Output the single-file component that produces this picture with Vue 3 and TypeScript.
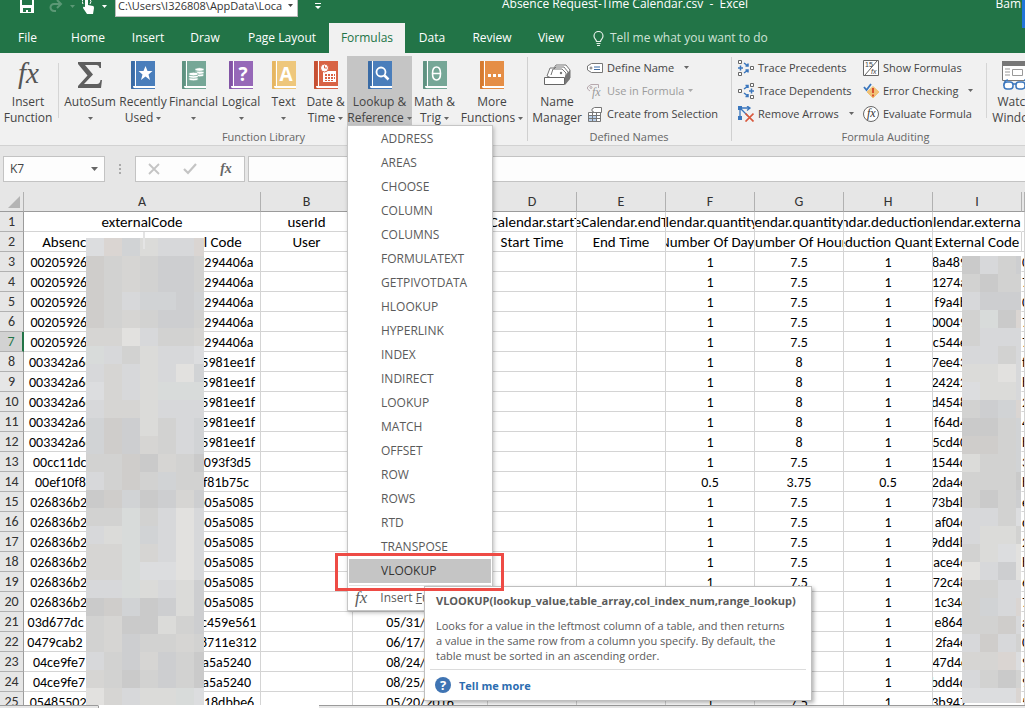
<script setup lang="ts">
import { ref } from 'vue'

interface BookButton {
  id: string
  lines: string[]
  color: string
  spine: string
  active?: boolean
}

const path = ref('C:\\Users\\I326808\\AppData\\Loca')
const cellName = ref('K7')
const formula = ref('')

const tabs = ['File', 'Home', 'Insert', 'Draw', 'Page Layout', 'Formulas', 'Data', 'Review', 'View']

const books: BookButton[] = [
  { id: 'star', lines: ['Recently', 'Used'], color: '#4a7ebb', spine: '#3a6ba5' },
  { id: 'coins', lines: ['Financial', ''], color: '#76a797', spine: '#5f9281' },
  { id: 'question', lines: ['Logical', ''], color: '#9668b8', spine: '#8254a5' },
  { id: 'letter', lines: ['Text', ''], color: '#eec77c', spine: '#e6b661' },
  { id: 'date', lines: ['Date &', 'Time'], color: '#d86344', spine: '#c65033' },
  { id: 'lens', lines: ['Lookup &', 'Reference'], color: '#4a7ebb', spine: '#3a6ba5', active: true },
  { id: 'theta', lines: ['Math &', 'Trig'], color: '#76a797', spine: '#5f9281' },
  { id: 'dots', lines: ['More', 'Functions'], color: '#e58e46', spine: '#d67b30' },
]

const functions = [
  'ADDRESS', 'AREAS', 'CHOOSE', 'COLUMN', 'COLUMNS', 'FORMULATEXT', 'GETPIVOTDATA', 'HLOOKUP',
  'HYPERLINK', 'INDEX', 'INDIRECT', 'LOOKUP', 'MATCH', 'OFFSET', 'ROW', 'ROWS', 'RTD',
  'TRANSPOSE', 'VLOOKUP',
]

const columns = ['A', 'B', 'C', 'D', 'E', 'F', 'G', 'H', 'I']

interface Row {
  n: number
  a: [string, string]
  c: string
  f: string
  g: string
  h: string
  i: string
  j: string
}

const raw: string[] = [
  '3|00205926|7294406a||1|7.5|1|8a489|0',
  '4|00205926|7294406a||1|7.5|1|1274a|7',
  '5|00205926|7294406a||1|7.5|1|f9a4b|0',
  '6|00205926|7294406a||1|7.5|1|00049|7a',
  '7|00205926|7294406a||1|7.5|1|c544e|7',
  '8|003342a6c|5981ee1f||1|8|1|7ee43|f',
  '9|003342a6c|5981ee1f||1|8|1|24242|b',
  '10|003342a6c|5981ee1f||1|8|1|d4548|2',
  '11|003342a6c|5981ee1f||1|8|1|f64d4|4',
  '12|003342a6c|5981ee1f||1|8|1|5cd40|b',
  '13|00cc11dc|b093f3d5||1|7.5|1|1544d|3',
  '14|00ef10f8|bf81b75c||0.5|3.75|0.5|2da4e|b',
  '15|026836b2|b05a5085||1|7.5|1|73b4b|e9',
  '16|026836b2|b05a5085||1|7.5|1|af046|d',
  '17|026836b2|b05a5085||1|7.5|1|9dd4b|2',
  '18|026836b2|b05a5085||1|7.5|1|ace46|b',
  '19|026836b2|b05a5085||1|7.5|1|72c48|6',
  '20|026836b2|b05a5085||1|7.5|1|1c34c|7b',
  '21|03d677dc|bc459e561|05/31/2016|1|7.5|1|e864f|a',
  '22|0479cab2|b8711e312|06/17/2016|1|7.5|1|2fa4e|0',
  '23|04ce9fe7|0a5a5240|08/24/2016|1|7.5|1|47d4c|9',
  '24|04ce9fe7|0a5a5240|08/25/2016|1|7.5|1|bdd4d|9',
  '25|05485502|b18dbbe6|05/20/2016|1|7.5|1|3b947|5',
]

const rows: Row[] = raw.map((line) => {
  const p = line.split('|')
  return { n: Number(p[0]), a: [p[1], p[2]], c: p[3], f: p[4], g: p[5], h: p[6], i: p[7], j: p[8] }
})

const shades: Record<string, string> = {
  a: '#cacaca', b: '#cfcdcb', c: '#cdced0', d: '#d2d2d1', e: '#d1d3d5', f: '#d6d5d3',
  g: '#d7d8da', h: '#dbdbd9', i: '#dcdddf', j: '#e2e1df', k: '#dad5d2', l: '#d8dbda',
}

const mosaicA = [
  'ikehggk', 'bdfdccd', 'bdfdccd', 'bdgeece', 'bdfdccd', 'ffjgddf', 'lgdhggi', 'gfghgje', 'ifghlll',
  'gffhggg', 'ebchdge', 'ebcfdge', 'ddbafda', 'gdbdedd', 'abeacfc', 'ddldgjg', 'ghlegjg', 'fflfgjg',
  'ffliijg', 'gglhghc', 'abeachc', 'dfaahdc', 'dfcddfd', 'gdcfcda', 'fdadcda', 'jfghhli',
].join('').split('')

const mosaicI = [
  'agdc', 'dadd', 'gccc', 'dlak', 'dggg', 'ggdg', 'hhjg', 'ihhg', 'dcek', 'aade', 'bbde', 'hdde',
  'ddda', 'dadc', 'ggdi', 'ghhd', 'dhij', 'jgcj', 'ddgg', 'degk', 'ddbg', 'gbgd', 'ffki', 'gdad',
  'iiik',
].join('').split('')
</script>

<template>
  <div class="page">
    <header class="titlebar">
      <div class="quick">
        <button class="qbtn save" aria-label="Save">
          <svg width="14" height="14" viewBox="0 0 14 14"><path d="M0 0h14v14H0z" fill="#fff" /><path d="M2 0h10v6H2zM3 9h8v4H8v-2H6v2H3z" fill="#227447" /></svg>
        </button>
        <button class="qbtn redo" aria-label="Redo">
          <svg width="14" height="14" viewBox="0 0 14 14"><path d="M12 5H5a3 3 0 0 0 0 7h2M8 1l4 4-4 4" fill="none" stroke="#5b9875" stroke-width="2" /></svg>
          <svg class="qc" width="5" height="3" viewBox="0 0 5 3"><path d="M0 0h5L2.5 3z" fill="#5b9875" /></svg>
        </button>
        <button class="qbtn touch" aria-label="Touch mode">
          <svg width="13" height="15" viewBox="0 0 13 15"><path d="M3 0h3v6l5 1q1 0 1 2l-1 6H5L1 9q0-2 2-1z" fill="#fff" /><path d="M1 5a4 4 0 0 1 0-5M8 5a4 4 0 0 0 0-5" fill="none" stroke="#fff" /></svg>
          <svg class="qc" width="5" height="3" viewBox="0 0 5 3"><path d="M0 0h5L2.5 3z" fill="#fff" /></svg>
        </button>
        <label class="pathbox">
          <input v-model="path" aria-label="Path" />
          <svg width="5" height="3" viewBox="0 0 5 3"><path d="M0 0h5L2.5 3z" fill="#444" /></svg>
        </label>
        <button class="qbtn more" aria-label="Customize">
          <svg width="6" height="6" viewBox="0 0 6 6"><path d="M0 0h6v1H0zM0 3h6L3 6z" fill="#fff" /></svg>
        </button>
      </div>
      <h1 class="title">Absence Request-Time Calendar.csv&nbsp; -&nbsp; Excel</h1>
      <span class="user">Bam</span>
    </header>
    <div class="edge"></div>

    <nav class="tabs">
      <button v-for="t in tabs" :key="t" class="tab" :class="{ on: t === 'Formulas' }">{{ t }}</button>
      <button class="tell">
        <svg width="11" height="15" viewBox="0 0 11 15"><path d="M3.5 10.5c0-2-2.500-2.500-2.500-5.500a4.500 4.500 0 0 1 9 0c0 3-2.500 3.500-2.500 5.500zM3.500 12.500h4M4 14.500h3" fill="none" stroke="#e5f0e9" stroke-width="1.200" /></svg>
        Tell me what you want to do
      </button>
    </nav>

    <section class="ribbon">
      <div class="group">
        <div class="library">
          <button class="big">
            <svg class="ico" width="28" height="28" viewBox="0 0 28 28"><text x="4" y="22" class="fxbig">fx</text></svg>
            <span>Insert</span><span>Function</span>
          </button>
          <i class="shortsep"></i>
          <button class="big">
            <svg class="ico" width="26" height="28" viewBox="0 0 26 28"><path d="M1 1h23v6h-1.500q-.5-3-3-3H8l8 9.500L7 23h13q3 0 3.500-4H25l-1 8H1v-2l9.500-10.500L1 3z" fill="#5f5f5f" /></svg>
            <span>AutoSum</span>
            <span><svg width="5" height="3" viewBox="0 0 5 3"><path d="M0 0h5L2.500 3z" fill="#666" /></svg></span>
          </button>
          <button v-for="b in books" :key="b.id" class="big" :class="{ active: b.active }">
            <svg class="ico" width="24" height="28" viewBox="0 0 24 28">
              <path d="M1 0h23v28H1q-1 0-1-1V1q0-1 1-1z" :fill="b.color" />
              <path d="M1 0h2.500v28H1q-1 0-1-1V1q0-1 1-1z" :fill="b.spine" />
              <path d="M4 0h1v25H4zM2 25h22v2H3q-1 0-1-2z" fill="#fff" />
              <path v-if="b.id === 'star'" d="M14.500 5l2 5h5l-4 3.500 1.500 5.500-4.500-3.500L10 19l1.500-5.500-4-3.500h5z" fill="#fff" />
              <g v-else-if="b.id === 'coins'" fill="#fff" stroke="#76a797" stroke-width=".7">
                <ellipse cx="17.500" cy="14" rx="4.500" ry="1.800" /><ellipse cx="17.500" cy="11.500" rx="4.500" ry="1.800" /><ellipse cx="17.500" cy="8.500" rx="4.500" ry="1.800" />
                <ellipse cx="11.500" cy="18" rx="4.800" ry="1.800" /><ellipse cx="11.500" cy="15.500" rx="4.800" ry="1.800" /><ellipse cx="11.500" cy="13" rx="4.800" ry="1.800" />
              </g>
              <text v-else-if="b.id === 'question'" x="14" y="20" class="mark">?</text>
              <text v-else-if="b.id === 'letter'" x="14" y="20" class="mark">A</text>
              <g v-else-if="b.id === 'date'">
                <path d="M9 10h13v11H9z" fill="#fff" />
                <path d="M11 13h2v2h-2zM14 13h2v2h-2zM17 13h2v2h-2zM11 16h2v2h-2zM14 16h2v2h-2zM17 16h2v2h-2zM20 13h1v2h-1zM20 16h1v2h-1zM11 19h2v1h-2zM14 19h2v1h-2zM17 19h2v1h-2z" fill="#d86344" />
                <circle cx="10.500" cy="7" r="4" fill="#fff" stroke="#d86344" /><path d="M10.500 4.500V7h2.500" fill="none" stroke="#d86344" />
              </g>
              <g v-else-if="b.id === 'lens'" fill="none" stroke="#fff">
                <circle cx="13" cy="11" r="4.500" stroke-width="1.800" /><path d="M16.500 14.500l4 4" stroke-width="2.500" />
              </g>
              <path v-else-if="b.id === 'theta'" d="M13.500 6q4 0 4 6.500t-4 6.500-4-6.500 4-6.500zM9.500 12.500h8" fill="none" stroke="#fff" stroke-width="1.600" />
              <path v-else d="M8 13h3v3H8zM13 13h3v3h-3zM18 13h3v3h-3z" fill="#fff" />
            </svg>
            <span>{{ b.lines[0] }}</span>
            <span>{{ b.lines[1] }}<svg width="5" height="3" viewBox="0 0 5 3"><path d="M0 0h5L2.500 3z" fill="#666" /></svg></span>
          </button>
        </div>
        <div class="caption">Function Library</div>
      </div>

      <div class="group">
        <div class="names">
          <button class="big">
            <svg class="ico" width="28" height="28" viewBox="0 0 28 28">
              <path d="M4 15l3-8h4l2-3h10l4 5v8l-6 6z" fill="#fff" stroke="#777" />
              <path d="M8 14l2-6h9l4 4v9M11 8l2-2h8l4 5v8" fill="none" stroke="#777" />
              <path d="M22 15l5-6v9l-5 6z" fill="#777" />
              <circle cx="18" cy="12" r="1.200" fill="#777" />
              <path d="M1.500 16.500h20v7h-20z" fill="#fff" stroke="#666" />
            </svg>
            <span>Name</span><span>Manager</span>
          </button>
          <div class="stack">
            <button class="small">
              <svg width="16" height="16" viewBox="0 0 16 16"><path d="M4.500 3.500h11v9h-11L.5 10V6z" fill="#fff" stroke="#777" /><circle cx="4" cy="8" r="1" fill="none" stroke="#777" /><path d="M7 7h6M7 9.500h6" stroke="#3a6ba5" /></svg>
              Define Name
              <svg class="far" width="5" height="3" viewBox="0 0 5 3"><path d="M0 0h5L2.500 3z" fill="#666" /></svg>
            </button>
            <button class="small off" disabled>
              <svg width="16" height="16" viewBox="0 0 16 16"><path d="M11.500 5V1.500H4L.5 4v2L3 8" fill="none" stroke="#b7a9ae" /><circle cx="4" cy="4.500" r="1" fill="none" stroke="#b7a9ae" /><text x="5" y="13" class="fxsm">fx</text></svg>
              Use in Formula<svg width="5" height="3" viewBox="0 0 5 3"><path d="M0 0h5L2.500 3z" fill="#aaa" /></svg>
            </button>
            <button class="small">
              <svg width="16" height="16" viewBox="0 0 16 16"><path d="M1.500 6.500h12v9h-12z" fill="#fff" /><path d="M1.500 9.500h8v6h-8z" fill="#b9d0ea" /><path d="M1.500 6.500h12v9h-12zM5.500 6.500v9M9.500 6.500v9M1.500 9.500h12M1.500 12.500h12" fill="none" stroke="#777" /><path d="M7.500 1.500h7v5h-7L5 5V3z" fill="#fff" stroke="#777" /></svg>
              Create from Selection
            </button>
          </div>
        </div>
        <div class="caption">Defined Names</div>
      </div>

      <div class="group">
        <div class="audit">
          <div class="stack">
            <button class="small">
              <svg width="16" height="16" viewBox="0 0 16 16"><path d="M.5.5h3v3h-3zM.5 12.500h3v3h-3zM12.500 6.500h3v3h-3z" fill="#fff" stroke="#666" /><path d="M0 8h5M2.500 5.500v5M6 3l4 3M10 3.500V6H7.500M6 13l4-3M10 12.500V10H7.500" fill="none" stroke="#3a76bd" stroke-width="1.500" /></svg>
              Trace Precedents
            </button>
            <button class="small">
              <svg width="16" height="16" viewBox="0 0 16 16"><path d="M12.500.5h3v3h-3zM12.500 12.500h3v3h-3zM.5 6.500h3v3h-3z" fill="#fff" stroke="#666" /><path d="M11 8h5M13.500 5.500v5M6 6l4-3M7.500 2.500H10V5M6 10l4 3M7.500 13.500H10V11" fill="none" stroke="#3a76bd" stroke-width="1.500" /></svg>
              Trace Dependents
            </button>
            <button class="small">
              <svg width="16" height="16" viewBox="0 0 16 16"><path d="M0 0h4v4H0zM0 10h4v4H0z" fill="#3a76bd" /><path d="M2 2v10M2 2h9M9 0l3 2-3 2.500M3 3l7 7" fill="none" stroke="#3a76bd" stroke-width="1.300" /><path d="M7.500 7.500l8 8M15.500 7.500l-8 8" stroke="#d9583c" stroke-width="1.700" /></svg>
              Remove Arrows
              <svg class="far" width="5" height="3" viewBox="0 0 5 3"><path d="M0 0h5L2.500 3z" fill="#666" /></svg>
            </button>
          </div>
          <div class="stack">
            <button class="small">
              <svg width="16" height="16" viewBox="0 0 16 16"><path d="M.5.500h15v15H.5z" fill="#fff" stroke="#666" /><path d="M14 1L2 15" stroke="#666" /><text x="2" y="7" class="tiny">15</text><text x="8" y="14" class="tiny it">fx</text></svg>
              Show Formulas
            </button>
            <button class="small">
              <svg width="16" height="16" viewBox="0 0 16 16"><path d="M10 3.500l6 5.500-6 6-6-6z" fill="#f0c277" stroke="#f0c277" /><path d="M9 5h2v5H9zM9 11.500h2v2H9z" fill="#d9502f" /><path d="M1 4l2.500 3L8 1" fill="none" stroke="#3a76bd" stroke-width="1.800" /></svg>
              Error Checking
              <svg class="far" width="5" height="3" viewBox="0 0 5 3"><path d="M0 0h5L2.500 3z" fill="#666" /></svg>
            </button>
            <button class="small">
              <svg width="16" height="16" viewBox="0 0 16 16"><circle cx="8" cy="8" r="7.500" fill="#fff" stroke="#666" /><text x="4" y="11" class="fxsm dark">fx</text></svg>
              Evaluate Formula
            </button>
          </div>
          <i class="shortsep"></i>
          <button class="big watch">
            <svg class="ico" width="26" height="30" viewBox="0 0 26 30"><path d="M.5.5h25v19H.5z" fill="#fff" stroke="#777" /><path d="M0 0h26v5H0z" fill="#777" /><path d="M3 8h5M3 11h5M3 14h5M10.500 8.500h10v6h-10z" fill="none" stroke="#999" /><path d="M2 25q0-6 4-6M22 19q2 0 3 4M11 23h3" fill="none" stroke="#3a76bd" stroke-width="1.500" /><rect x="2" y="21" width="9" height="7" rx="3" fill="#fff" stroke="#3a76bd" stroke-width="1.500" /><rect x="14" y="21" width="9" height="7" rx="3" fill="#fff" stroke="#3a76bd" stroke-width="1.500" /></svg>
            <span>Watch</span><span>Window</span>
          </button>
        </div>
        <div class="caption">Formula Auditing</div>
      </div>
    </section>

    <div class="formulabar">
      <label class="namebox">
        <input v-model="cellName" aria-label="Name box" />
        <svg width="7" height="4" viewBox="0 0 7 4"><path d="M0 0h7L3.500 4z" fill="#666" /></svg>
      </label>
      <svg class="grip" width="2" height="10" viewBox="0 0 2 10"><path d="M0 0h2v2H0zM0 4h2v2H0zM0 8h2v2H0z" fill="#aaa" /></svg>
      <div class="fxbox">
        <button aria-label="Cancel"><svg width="12" height="12" viewBox="0 0 12 12"><path d="M1 1l10 10M11 1L1 11" stroke="#c4c4c4" stroke-width="1.800" /></svg></button>
        <button aria-label="Enter"><svg width="14" height="12" viewBox="0 0 14 12"><path d="M1 6l4 4 8-9" fill="none" stroke="#c4c4c4" stroke-width="2.200" /></svg></button>
        <button class="fxtext">fx</button>
      </div>
      <input v-model="formula" class="formula" aria-label="Formula" />
    </div>

    <main class="sheet">
      <table>
        <colgroup>
          <col class="w-n" /><col class="w-a" /><col class="w-b" /><col class="w-c" />
          <col v-for="k in 6" :key="k" class="w-d" /><col />
        </colgroup>
        <thead>
          <tr>
            <th class="corner"><svg width="12" height="12" viewBox="0 0 12 12"><path d="M12 0v12H0z" fill="#b4b4b4" /></svg></th>
            <th v-for="c in columns" :key="c">{{ c }}</th>
            <th></th>
          </tr>
        </thead>
        <tbody>
          <tr class="heading">
            <th>1</th>
            <td><div>externalCode</div></td><td><div>userId</div></td><td></td>
            <td><div>eCalendar.startT</div></td><td><div>eCalendar.endT</div></td>
            <td><div>alendar.quantityI</div></td><td><div>endar.quantity</div></td>
            <td><div>endar.deductionQ</div></td><td class="open"><div class="spill">lendar.externa</div></td><td></td>
          </tr>
          <tr class="heading">
            <th>2</th>
            <td><div class="split"><span>Absence</span><span>l Code</span></div></td><td><div>User</div></td><td></td>
            <td><div>Start Time</div></td><td><div>End Time</div></td>
            <td><div>Number Of Days</div></td><td><div>Number Of Hours</div></td>
            <td><div>Deduction Quantity</div></td><td><div>External Code</div></td><td></td>
          </tr>
          <tr v-for="r in rows" :key="r.n" :class="{ current: r.n === 7 }">
            <th>{{ r.n }}</th>
            <td><div class="split"><span>{{ r.a[0] }}</span><span>{{ r.a[1] }}</span></div></td>
            <td></td>
            <td><div>{{ r.c }}</div></td>
            <td></td><td></td>
            <td><div>{{ r.f }}</div></td>
            <td><div>{{ r.g }}</div></td>
            <td><div>{{ r.h }}</div></td>
            <td class="open"><div class="code"><span>{{ r.i }}</span></div></td>
            <td class="tail"><div>{{ r.j }}</div></td>
          </tr>
        </tbody>
      </table>
      <div class="mosaic first"><i v-for="(m, k) in mosaicA" :key="k" :style="{ background: shades[m] }"></i></div>
      <div class="mosaic second"><i v-for="(m, k) in mosaicI" :key="k" :style="{ background: shades[m] }"></i></div>
      <i class="tick"></i>
    </main>
    <footer class="bottom"><i class="nav"></i><i class="sheettab"></i><i class="rest"></i></footer>

    <div class="menu" role="menu">
      <button v-for="f in functions" :key="f" role="menuitem" :class="{ picked: f === 'VLOOKUP' }">{{ f }}</button>
      <button class="insert" role="menuitem"><em>fx</em><span>Insert <u>F</u>unction...</span></button>
    </div>

    <aside class="tooltip" role="tooltip">
      <strong>VLOOKUP(lookup_value,table_array,col_index_num,range_lookup)</strong>
      <p>Looks for a value in the leftmost column of a table, and then returns a value in the same row from a column you specify. By default, the table must be sorted in an ascending order.</p>
      <a href="#help">
        <svg width="16" height="16" viewBox="0 0 16 16"><circle cx="8" cy="8" r="8" fill="#3f74b3" /><text x="8" y="13" class="help">?</text></svg>
        Tell me more
      </a>
    </aside>
    <div class="highlight"></div>
  </div>
</template>

<style>
html,
body {
  margin: 0;
  height: 100%;
  overflow: hidden;
}
#app {
  height: 100%;
}
</style>

<style scoped>
.page {
  position: relative;
  height: 100%;
  display: flex;
  flex-direction: column;
  overflow: hidden;
  background: #e6e6e6;
  font: 12px/16px "Open Sans", "Noto Sans", sans-serif;
  color: #444;
}
button,
input {
  font: inherit;
  color: inherit;
  border: 0;
  padding: 0;
  margin: 0;
  background: none;
  outline: none;
  white-space: nowrap;
}
input {
  min-width: 0;
}
.titlebar {
  flex: none;
  height: 23px;
  display: grid;
  grid-template-columns: 325px 1fr 100px;
  background: #227447;
  color: #fff;
  overflow: hidden;
}
.quick {
  display: flex;
  align-items: flex-start;
  min-width: 0;
}
.qbtn {
  display: flex;
  align-items: center;
  gap: 7px;
  height: 12px;
}
.save { margin-left: 20px; }
.redo { margin-left: 15px; }
.touch { margin-left: 7px; }
.more { margin-left: 17px; }
.pathbox {
  display: flex;
  align-items: center;
  box-sizing: border-box;
  width: 183px;
  height: 17px;
  padding-bottom: 5px;
  margin-left: 8px;
  background: #fff;
  border: 1px solid #bbb;
  border-top: 0;
  color: #333;
  font-size: 11px;
}
.pathbox input {
  flex: 1;
  height: 14px;
  padding-left: 2px;
}
.pathbox svg { margin: 0 4px; }
.title {
  margin: 0;
  font-size: 12px;
  font-weight: 400;
  line-height: 8px;
  text-align: center;
  white-space: pre;
}
.user {
  justify-self: end;
  line-height: 8px;
  margin-right: 4px;
}
.edge {
  position: absolute;
  right: 0;
  top: 0;
  width: 3px;
  height: 28px;
  background: #2175d9;
}
.tabs {
  flex: none;
  display: grid;
  grid-template-columns: 55px 66px 54px 60px 94px 76px 54px 66px 52px auto;
  justify-content: start;
  height: 30px;
  background: #227447;
  color: #fff;
}
.tab.on {
  background: #f1f1f1;
  color: #227447;
}
.tell {
  display: flex;
  align-items: center;
  gap: 6px;
  margin-left: 16px;
  color: #cfe3d7;
}
.ribbon {
  flex: none;
  display: flex;
  height: 92px;
  background: #f1f1f1;
  border-bottom: 1px solid #d2d2d2;
  overflow: hidden;
}
.group {
  position: relative;
  flex: none;
  display: flex;
  flex-direction: column;
  padding-top: 3px;
}
.group + .group::before {
  content: "";
  position: absolute;
  left: 0;
  top: 4px;
  width: 1px;
  height: 84px;
  background: #d0d0d0;
}
.caption {
  height: 20px;
  font-size: 11px;
  line-height: 22px;
  text-align: center;
  color: #666;
}
.library {
  display: grid;
  grid-template-columns: 56px 6px 56px 50px 51px 44px 41px 43px 65px 45px 70px;
  height: 70px;
}
.shortsep {
  width: 1px;
  height: 55px;
  margin: 7px 2px;
  background: #d5d5d5;
}
.big {
  display: flex;
  flex-direction: column;
  align-items: center;
  height: 70px;
}
.big.active { background: #c5c5c5; }
.big .ico {
  flex: none;
  margin: 5px 0;
}
.big span {
  display: flex;
  align-items: center;
  gap: 3px;
  height: 16px;
}
.fxbig {
  font: italic 29px "Liberation Serif", serif;
  fill: #555;
}
.mark {
  font: bold 19px "Open Sans", sans-serif;
  fill: #fff;
  text-anchor: middle;
}
.names {
  display: grid;
  grid-template-columns: 60px 144px;
  height: 70px;
}
.stack {
  display: flex;
  flex-direction: column;
}
.small {
  display: flex;
  align-items: center;
  gap: 4px;
  height: 23px;
  font-size: 11px;
}
.small svg { flex: none; }
.small .far { margin-left: 6px; }
.off { color: #9c9c9c; }
.audit {
  display: grid;
  grid-template-columns: 125px 121px 6px 50px;
  padding-left: 7px;
  height: 70px;
}
.fxsm {
  font: italic 12px "Liberation Serif", serif;
  fill: #999;
}
.dark { fill: #333; }
.tiny {
  font: 7px "Liberation Sans", sans-serif;
  fill: #444;
}
.it { font-style: italic; }
.watch .ico { margin: 5px 0 3px; }
.formulabar {
  flex: none;
  display: flex;
  align-items: center;
  height: 46px;
  padding-left: 3px;
}
.namebox,
.fxbox,
.formula {
  box-sizing: border-box;
  height: 26px;
  border: 1px solid #c3c3c3;
  background: #fdfdfd;
}
.namebox {
  display: flex;
  align-items: center;
  width: 102px;
}
.namebox input {
  flex: 1;
  padding-left: 6px;
}
.namebox svg { margin-right: 6px; }
.grip { margin: 0 14px; }
.fxbox {
  display: flex;
  width: 110px;
  margin-right: 3px;
}
.fxbox button {
  flex: 1;
  display: flex;
  align-items: center;
  justify-content: center;
}
.fxbox .fxtext {
  font: italic bold 14px "Liberation Serif", serif;
  color: #666;
}
.formula {
  flex: 1;
  border-right: 0;
  padding: 0 6px;
}
.sheet {
  position: relative;
  flex: 1;
  min-height: 0;
  overflow: hidden;
  background: #fff;
  font: 14px/19px Carlito, Lato, "Open Sans", sans-serif;
  color: #000;
}
table {
  width: 100%;
  table-layout: fixed;
  border-collapse: separate;
  border-spacing: 0;
}
.w-n { width: 24px; }
.w-a { width: 237px; }
.w-b { width: 92px; }
.w-c { width: 135px; }
.w-d { width: 89px; }
th,
td {
  box-sizing: border-box;
  height: 20px;
  padding: 0;
  border-right: 1px solid #d4d4d4;
  border-bottom: 1px solid #d4d4d4;
  font-weight: 400;
}
.heading td { font-size: 15px; }
th {
  background: #e6e6e6;
  border-color: #b1b1b1;
  color: #333;
  overflow: hidden;
}
thead th { border-bottom-color: #9b9b9b; }
tbody th { border-right-color: #9b9b9b; }
.corner { text-align: right; }
.corner svg {
  display: block;
  margin: 3px 3px 3px auto;
}
td div {
  display: flex;
  justify-content: center;
  overflow: hidden;
  white-space: nowrap;
  height: 19px;
  line-height: 21px;
}
td .split { gap: 110px; }
.open { border-right-color: transparent; }
td .spill {
  justify-content: flex-start;
  overflow: visible;
}
td .code { justify-content: flex-start; }
.code span {
  display: flex;
  justify-content: flex-end;
  width: 34px;
  overflow: hidden;
}
.tail div { justify-content: flex-start; }
.current th {
  background: #d2d2d2;
  color: #227447;
  border-right: 2px solid #227447;
}
.mosaic {
  position: absolute;
  display: grid;
  grid-auto-rows: 18px;
  overflow: hidden;
}
.first {
  left: 86px;
  top: 46px;
  width: 118px;
  height: 467px;
  grid-template-columns: repeat(6, 18px) 10px;
}
.second {
  left: 962px;
  top: 64px;
  width: 59px;
  height: 447px;
  grid-template-columns: repeat(3, 18px) 5px;
}
.tick {
  position: absolute;
  left: 143px;
  top: 40px;
  width: 2px;
  height: 17px;
  background: #e4e4e4;
}
.bottom {
  flex: none;
  display: flex;
  height: 3px;
}
.bottom i {
  border-top: 1px solid #9b9b9b;
  background: #e6e6e6;
}
.nav { width: 98px; }
.bottom .sheettab {
  width: 220px;
  background: #fff;
  border-color: #fff;
  border-left: 1px solid #9b9b9b;
}
.rest { flex: 1; }
.menu {
  position: absolute;
  left: 347px;
  top: 125px;
  width: 142px;
  padding: 1px;
  display: flex;
  flex-direction: column;
  background: #fff;
  border: 1px solid #c6c6c6;
  box-shadow: 1px 2px 4px rgba(0, 0, 0, 0.25);
  color: #5a5a5a;
}
.menu button {
  height: 24px;
  padding-left: 32px;
  text-align: left;
}
.menu .picked {
  background: #c5c5c5;
  color: #333;
}
.menu .insert {
  display: flex;
  align-items: center;
  gap: 13px;
  padding-left: 6px;
  margin-top: 2px;
  border-top: 1px solid #e1e1e1;
  overflow: hidden;
}
.insert em { font: italic 17px "Liberation Serif", serif; }
.tooltip {
  position: absolute;
  left: 424px;
  top: 586px;
  box-sizing: border-box;
  width: 388px;
  height: 115px;
  padding: 6px 5px;
  background: #fff;
  border: 1px solid #bfbfbf;
  box-shadow: 2px 2px 4px rgba(0, 0, 0, 0.3);
  color: #5a5a5a;
  font-size: 11px;
  line-height: 15px;
}
.tooltip strong,
.tooltip p {
  display: block;
  margin: 0 6px;
  white-space: nowrap;
}
.tooltip p {
  margin: 10px 16px 0 6px;
  white-space: normal;
}
.tooltip a {
  display: flex;
  align-items: center;
  gap: 8px;
  margin-top: 6px;
  padding: 7px 5px 0;
  border-top: 1px solid #dcdcdc;
  font-weight: 700;
  color: #2b6cb0;
  text-decoration: none;
}
.help {
  font: bold 13px "Open Sans", sans-serif;
  fill: #fff;
  text-anchor: middle;
}
.highlight {
  position: absolute;
  left: 335px;
  top: 553px;
  width: 163px;
  height: 32px;
  border: 3px solid #ee4b45;
  pointer-events: none;
}
</style>
